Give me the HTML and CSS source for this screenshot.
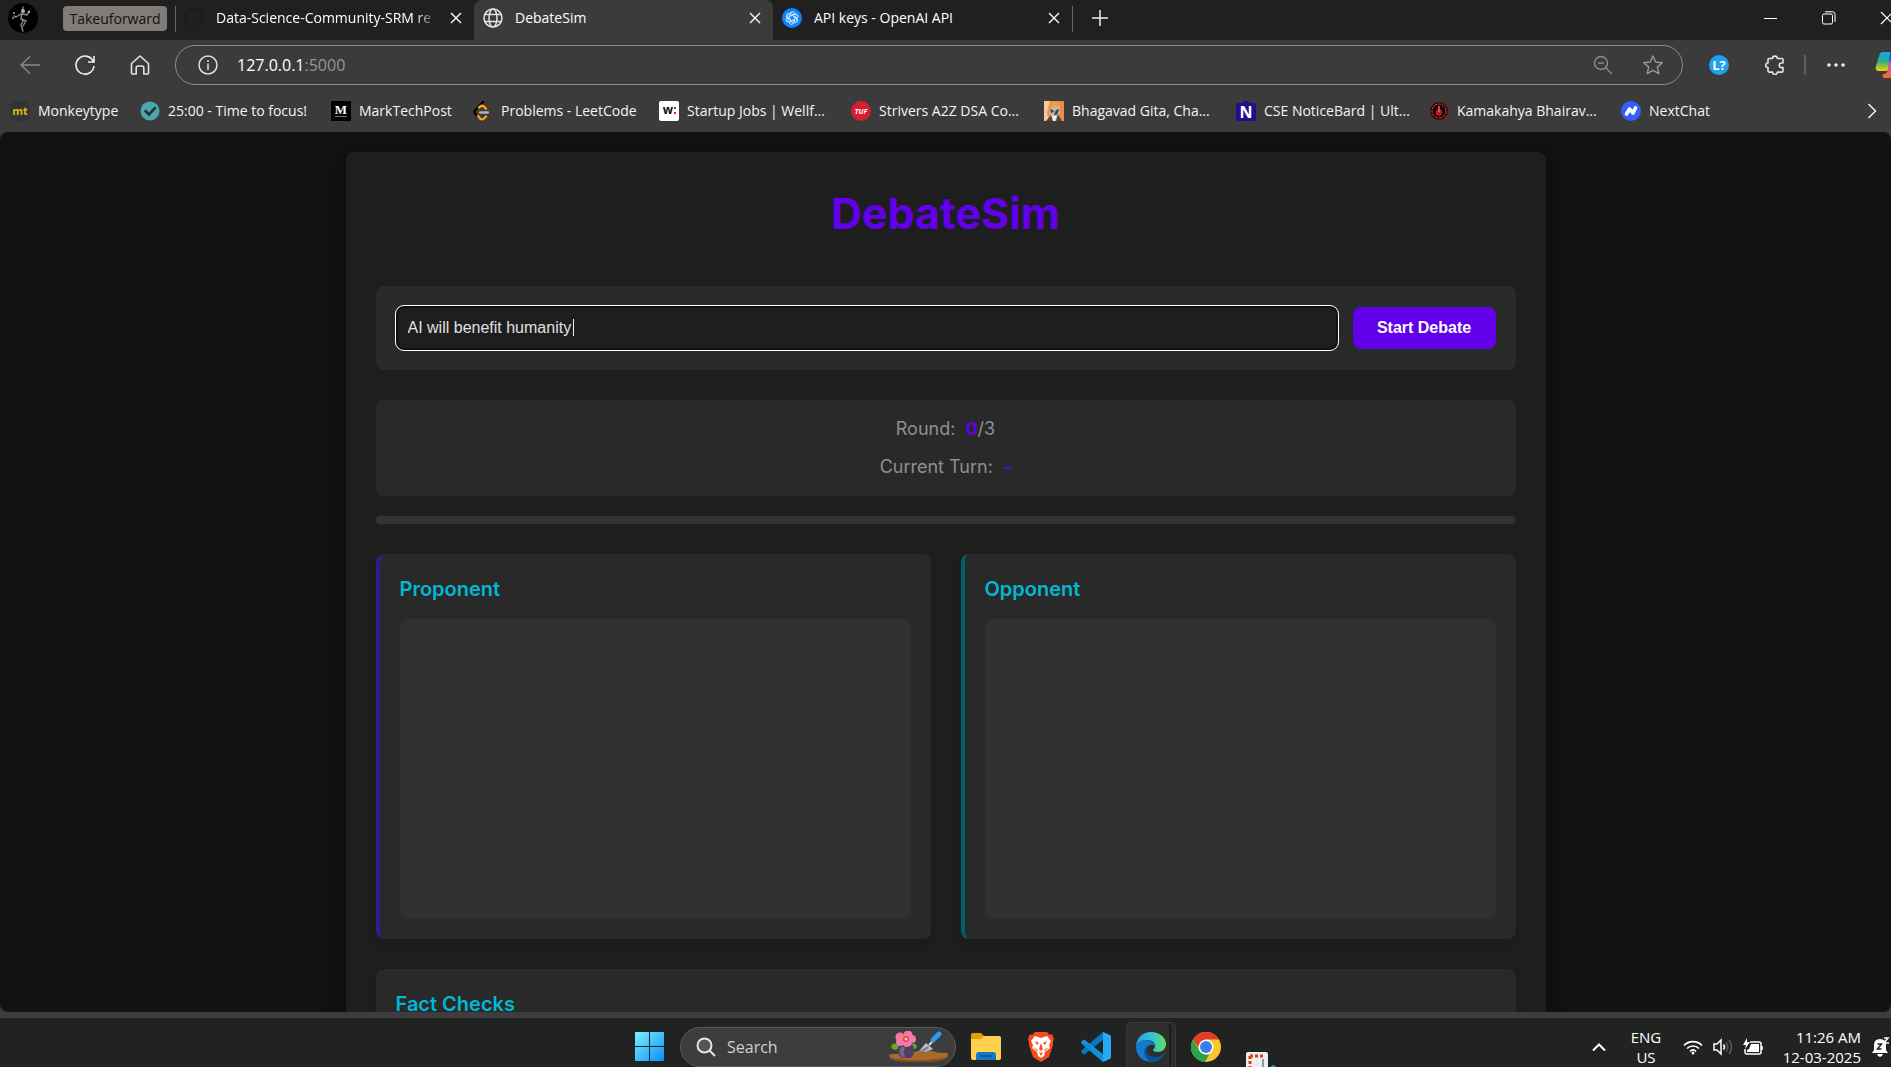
FILE: index.html
```html
<!DOCTYPE html>
<html lang="en">
<head>
<meta charset="utf-8">
<title>DebateSim</title>
<link rel="stylesheet" href="styles.css">
</head>
<body>
<header class="browser">
  <div class="tabstrip">
    <button class="profile" aria-label="Profile">
      <svg width="30" height="30" viewBox="0 0 30 30"><circle cx="15" cy="15" r="15" fill="#000"/><g fill="none" stroke="#8a8a8a" stroke-width="1.400" stroke-linecap="round" stroke-linejoin="round"><path d="M14 10l-1 5 2 3-2 4 2 6M13 16l5 2-3 5M13 11l-5 3-2-1M15 11l4 1 2-4M15 4v3"/></g><circle cx="15" cy="8" r="2" fill="#b0b0b0"/><circle cx="21" cy="9" r="1" fill="#ccc"/><circle cx="6" cy="10" r="1" fill="#aaa"/><circle cx="5" cy="15" r="1" fill="#999"/></svg>
    </button>
    <button class="group-chip">Takeuforward</button>
    <span class="divider first"></span>
    <div class="tab tab-one">
      <svg width="20" height="20" viewBox="0 0 16 16" fill="#1a1c20"><path d="M8 0a8 8 0 0 0-2.5 15.6c.4 0 .5-.2.5-.4v-1.500c-2.200.5-2.700-1-2.700-1-.4-.9-.9-1.200-.9-1.200-.7-.5.1-.5.1-.5.800.1 1.200.8 1.200.8.7 1.200 1.900.9 2.300.7.1-.5.3-.9.5-1.100-1.800-.2-3.600-.9-3.600-4 0-.9.3-1.600.8-2.100-.1-.2-.4-1 .1-2.100 0 0 .7-.2 2.200.8a7.500 7.500 0 0 1 4 0c1.500-1 2.200-.8 2.200-.8.4 1.100.2 1.900.1 2.100.5.6.8 1.300.8 2.100 0 3.100-1.900 3.800-3.600 4 .3.300.5.800.5 1.500v2.200c0 .2.1.5.6.4A8 8 0 0 0 8 0z"/></svg>
      <span class="tab-title">Data-Science-Community-SRM re</span>
      <button class="close" aria-label="Close tab"><svg width="12" height="12" viewBox="0 0 12 12"><path d="M1 1l10 10M11 1L1 11" stroke="#eee" stroke-width="1.500"/></svg></button>
    </div>
    <div class="tab tab-two active">
      <svg width="20" height="20" viewBox="0 0 20 20" fill="none" stroke="#e4e4e4" stroke-width="1.500"><circle cx="10" cy="10" r="9"/><ellipse cx="10" cy="10" rx="4" ry="9"/><path d="M2 6.500h16M2 13.500h16"/></svg>
      <span class="tab-title">DebateSim</span>
      <button class="close" aria-label="Close tab"><svg width="12" height="12" viewBox="0 0 12 12"><path d="M1 1l10 10M11 1L1 11" stroke="#eee" stroke-width="1.500"/></svg></button>
    </div>
    <div class="tab tab-three">
      <svg width="20" height="20" viewBox="0 0 20 20"><circle cx="10" cy="10" r="10" fill="#0a84ff"/><g fill="none" stroke="#d8ecff" stroke-width=".9"><path id="petal" d="M7.800 10V6.200a2.700 2.700 0 0 1 5-1.200M7.800 8l4-2.300 3 1.700"/><use href="#petal" transform="rotate(60 10 10)"/><use href="#petal" transform="rotate(120 10 10)"/><use href="#petal" transform="rotate(180 10 10)"/><use href="#petal" transform="rotate(240 10 10)"/><use href="#petal" transform="rotate(300 10 10)"/></g></svg>
      <span class="tab-title">API keys - OpenAI API</span>
      <button class="close" aria-label="Close tab"><svg width="12" height="12" viewBox="0 0 12 12"><path d="M1 1l10 10M11 1L1 11" stroke="#eee" stroke-width="1.500"/></svg></button>
    </div>
    <span class="divider"></span>
    <button class="new-tab" aria-label="New tab"><svg width="18" height="18" viewBox="0 0 18 18"><path d="M9 1v16M1 9h16" stroke="#eee" stroke-width="1.500"/></svg></button>
    <div class="window-controls">
      <button aria-label="Minimize"><svg width="14" height="14" viewBox="0 0 14 14"><path d="M0 7.500h13" stroke="#fff"/></svg></button>
      <button aria-label="Restore"><svg width="14" height="14" viewBox="0 0 14 14" fill="none" stroke="#fff"><rect x=".5" y="3" width="10" height="10" rx="1.500"/><path d="M3 .8h7.500a2.500 2.500 0 0 1 2.500 2.500V11"/></svg></button>
      <button aria-label="Close window"><svg width="14" height="14" viewBox="0 0 14 14"><path d="M1 1l12 12M13 1L1 13" stroke="#fff" stroke-width="1.200"/></svg></button>
    </div>
  </div>

  <div class="toolbar">
    <button aria-label="Back"><svg width="20" height="20" viewBox="0 0 20 20" fill="none" stroke="#8a8a8a" stroke-width="1.400"><path d="M20 10H1M10 1.500L1 10l9 8.500"/></svg></button>
    <button aria-label="Refresh"><svg width="20" height="20" viewBox="0 0 20 20" fill="none" stroke="#eee" stroke-width="1.600"><path d="M18.500 7A9 9 0 1 0 19 11M19 1v6h-6"/></svg></button>
    <button aria-label="Home"><svg width="20" height="20" viewBox="0 0 20 20" fill="none" stroke="#e4e4e4" stroke-width="1.600" stroke-linejoin="round"><path d="M1.500 8.500L10 1l8.500 7.500V18a1 1 0 0 1-1 1h-3.700v-6a2 2 0 0 0-2-2H8.200a2 2 0 0 0-2 2v6H2.500a1 1 0 0 1-1-1z"/></svg></button>
    <div class="address">
      <button aria-label="Site information"><svg width="20" height="20" viewBox="0 0 20 20" fill="none" stroke="#ddd" stroke-width="1.500"><circle cx="10" cy="10" r="9"/><path d="M10 8.500V15M10 5v2"/></svg></button>
      <div class="url" role="textbox" aria-label="Address">127.0.0.1<span>:5000</span></div>
      <button aria-label="Zoom"><svg width="20" height="20" viewBox="0 0 20 20" fill="none" stroke="#8c8c8c" stroke-width="1.400"><circle cx="8" cy="8" r="6.500"/><path d="M12.700 12.700L19 19M5 8h6"/></svg></button>
      <button class="star" aria-label="Add to favorites"><svg width="20" height="20" viewBox="0 0 20 20" fill="none" stroke="#9a9a9a" stroke-width="1.400" stroke-linejoin="round"><path d="M10 1l2.700 6 6.600.7-5 4.400 1.500 6.500L10 15.300l-5.800 3.300 1.500-6.500-5-4.400 6.600-.7z"/></svg></button>
    </div>
    <div class="tools">
      <button class="ext" aria-label="Extension"><b>L?</b></button>
      <button aria-label="Extensions"><svg width="20" height="20" viewBox="0 0 20 20" fill="none" stroke="#e4e4e4" stroke-width="1.600" stroke-linejoin="round"><path d="M4 3.500h3.500a2.400 2.400 0 0 1 4.800 0H17a1 1 0 0 1 1 1V8h-1.500a2.300 2.300 0 0 0 0 4.600H18v3.500a1 1 0 0 1-1 1h-4.700a2.400 2.400 0 0 1-4.800 0H4a1 1 0 0 1-1-1v-3.500a2.300 2.300 0 0 1 0-4.600V4.500a1 1 0 0 1 1-1z"/></svg></button>
      <span class="tool-divider"></span>
      <button aria-label="Settings and more"><svg width="20" height="20" viewBox="0 0 20 20" fill="#eee"><circle cx="3" cy="10" r="1.800"/><circle cx="10" cy="10" r="1.800"/><circle cx="17" cy="10" r="1.800"/></svg></button>
      <button class="copilot" aria-label="Copilot"><svg width="30" height="26" viewBox="0 0 30 26"><defs><linearGradient id="cpA" x1="0" y1="0" x2="0" y2="1"><stop offset="0" stop-color="#16a8f0"/><stop offset=".5" stop-color="#2cae8a"/><stop offset="1" stop-color="#ffd000"/></linearGradient><linearGradient id="cpB" x1="0" y1="0" x2="0" y2="1"><stop offset="0" stop-color="#a84fe0"/><stop offset="1" stop-color="#ff6a2b"/></linearGradient></defs><path d="M8 0h13l-5 15c-1 3-3 4-6 4H4c-3 0-4-2-3-5L4 4c1-3 2-4 4-4z" fill="url(#cpA)"/><path d="M14 9h13c3 0 3 3 2 6l-2 7c-1 3-3 4-5 4H9c-1 0-2-2-1-4 3 0 4-1 5-5z" fill="url(#cpB)"/><path d="M15 0h6l-3 9h-4z" fill="#2052cb"/></svg></button>
    </div>
  </div>

  <nav class="bookmarks" aria-label="Favorites">
    <a href="#"><svg class="mt" width="20" height="20" viewBox="0 0 20 20"><rect width="20" height="20" rx="4" fill="#323437"/><text x="10" y="14" text-anchor="middle">mt</text></svg><span>Monkeytype</span></a>
    <a href="#"><svg width="20" height="20" viewBox="0 0 20 20"><circle cx="10" cy="10" r="9.500" fill="#4ba7ae"/><path d="M5.500 10l3.500 3.500L15 7" fill="none" stroke="#25353a" stroke-width="2.600" stroke-linecap="round"/></svg><span>25:00 - Time to focus!</span></a>
    <a href="#"><svg class="mk" width="20" height="20" viewBox="0 0 20 20"><rect width="20" height="20" fill="#000"/><text x="10" y="13" text-anchor="middle">M</text><path d="M4 15.500h12" stroke="#777"/></svg><span>MarkTechPost</span></a>
    <a href="#"><svg width="20" height="20" viewBox="0 0 20 20" fill="none" stroke-width="2.300" stroke-linecap="round"><path d="M10 1L2 9.500a2 2 0 0 0 0 3L5 16" stroke="#000"/><path d="M5 15l2 2.500a3 3 0 0 0 4 0l2-2M6 6.500l1-.8a3 3 0 0 1 4 0l2 2" stroke="#ffa116"/><path d="M7 11.500h8" stroke="#b3b3b3"/></svg><span>Problems - LeetCode</span></a>
    <a href="#"><svg class="wf" width="20" height="20" viewBox="0 0 20 20"><rect width="20" height="20" rx="2" fill="#fff"/><text x="9" y="13" text-anchor="middle">w</text><path d="M15 6h2v2h-2zM15 11h2v2h-2z" fill="#e02020"/></svg><span>Startup Jobs | Wellf...</span></a>
    <a href="#"><svg class="tuf" width="20" height="20" viewBox="0 0 20 20"><circle cx="10" cy="10" r="10" fill="#d41f30"/><text x="10" y="13" text-anchor="middle">TUF</text></svg><span>Strivers A2Z DSA Co...</span></a>
    <a href="#"><svg width="20" height="20" viewBox="0 0 20 20"><rect width="20" height="20" fill="#eb8a4b"/><path d="M0 0h6L3 12l2 8H0z" fill="#f7c79d"/><path d="M5 8c0-5 2-7 5-7s6 2 6 6l-1 13H6z" fill="#c9b7a6"/><path d="M4 6c2-6 10-6 12 0l-5-2-5 4z" fill="#f59b22"/><path d="M6 8l3 1 1 2-3 1zM12 9l3-1-1 4-2 3-2-1zM2 20l5-6 2 6zM14 13l4 7h-6z" fill="#4c443f"/><path d="M8 15l5-1-2 6H9z" fill="#eee"/></svg><span>Bhagavad Gita, Cha...</span></a>
    <a href="#"><svg class="nb" width="20" height="20" viewBox="0 0 20 20"><path d="M2 2h5a3 3 0 0 1 6 0h5a2 2 0 0 1 2 2v14a2 2 0 0 1-2 2H2a2 2 0 0 1-2-2V4a2 2 0 0 1 2-2z" fill="#250c8c"/><text x="10" y="17" text-anchor="middle">N</text></svg><span>CSE NoticeBard | Ult...</span></a>
    <a href="#"><svg width="20" height="20" viewBox="0 0 20 20"><circle cx="10" cy="10" r="9.300" fill="#160808" stroke="#9c1119" stroke-width="1.200"/><circle cx="10" cy="10" r="7" fill="none" stroke="#777" stroke-dasharray="3 1"/><circle cx="10" cy="11.500" r="3.200" fill="#d10f18"/><path d="M10 5v6" stroke="#e66" stroke-width="1.500"/></svg><span>Kamakahya Bhairav...</span></a>
    <a href="#"><svg width="20" height="20" viewBox="0 0 20 20"><circle cx="10" cy="10" r="10" fill="#335fff"/><path d="M5.500 13L8.500 8l3.500 4 2.500-5" fill="none" stroke="#fff" stroke-width="3.600" stroke-linecap="round" stroke-linejoin="round"/></svg><span>NextChat</span></a>
    <button aria-label="More favorites"><svg width="10" height="16" viewBox="0 0 10 16"><path d="M1.500 1l7 7-7 7" fill="none" stroke="#eee" stroke-width="1.600"/></svg></button>
  </nav>
</header>

<main class="viewport">
  <div class="app">
    <h1>DebateSim</h1>
    <form class="topic">
      <div class="topic-field">
        <input type="text" value="AI will benefit humanity" aria-label="Debate topic">
        <span class="caret"></span>
      </div>
      <button type="button">Start Debate</button>
    </form>
    <section class="status">
      <p>Round: <strong>0</strong>/3</p>
      <p>Current Turn: <strong>-</strong></p>
    </section>
    <div class="progress"></div>
    <div class="sides">
      <section class="side proponent"><h2>Proponent</h2><div class="speech"></div></section>
      <section class="side opponent"><h2>Opponent</h2><div class="speech"></div></section>
    </div>
    <section class="facts"><h2>Fact Checks</h2></section>
  </div>
</main>

<footer class="taskbar">
  <div class="apps">
    <button aria-label="Start"><svg width="30" height="30" viewBox="0 0 30 30"><defs><linearGradient id="win" gradientUnits="userSpaceOnUse" x1="0" y1="0" x2="29" y2="29"><stop offset="0" stop-color="#7cf0ff"/><stop offset="1" stop-color="#0a8ffa"/></linearGradient></defs><path d="M0 1q0-1 1-1h13v14H0zM15 0h13q1 0 1 1v13H15zM0 15h14v14H1q-1 0-1-1zM15 15h14v13q0 1-1 1H15z" fill="url(#win)"/></svg></button>
    <label class="search">
      <svg width="20" height="20" viewBox="0 0 20 20" fill="none" stroke="#e6e6e6" stroke-width="2"><circle cx="8.500" cy="8.500" r="7" fill="#555"/><path d="M13.500 13.500L19 19"/></svg>
      <input type="text" placeholder="Search" aria-label="Search">
      <svg width="60" height="32" viewBox="0 0 60 32"><path d="M1 24c8-3 14 1 22-2s18-3 25-1 12-1 12 3-7 7-29 7S2 30 1 24z" fill="#a8692c"/><path d="M2 26c10 5 45 4 56 0-3 4-14 5-28 5S4 30 2 26z" fill="#80481b"/><path d="M3 15c3-4 7-3 8 2-4 3-7 2-8-2zM22 16c2-5 6-4 7 0-2 3-5 3-7 0z" fill="#62a82c"/><path d="M11 14h14c2 6 1 12-3 13h-8c-4-2-5-7-3-13z" fill="#4d405f"/><path d="M13 16h4c-2 4-1 8 1 10h-4c-3-3-3-6-1-10z" fill="#746287"/><g fill="#f27aa5"><circle cx="12" cy="6" r="4.500"/><circle cx="20" cy="4" r="4.500"/><circle cx="24" cy="8" r="4"/><circle cx="19" cy="11" r="5"/><circle cx="12" cy="11" r="4"/></g><circle cx="18" cy="8" r="3" fill="#e43c62"/><circle cx="18" cy="8" r="1.500" fill="#ffd451"/><path d="M31 20l7-8 7 6-8 3z" fill="#b9c4cc"/><path d="M31 20l9-5 1 2-5 4z" fill="#788791"/><path d="M41 14l5-5" stroke="#dce4e8" stroke-width="2"/><path d="M45 9l6-6" stroke="#2b9af0" stroke-width="5" stroke-linecap="round"/></svg>
    </label>
    <button aria-label="File Explorer"><svg width="30" height="28" viewBox="0 0 30 28"><path d="M0 2q0-2 2-2h8l3 3h13v8H0z" fill="#df9d0b"/><path d="M0 6h10l3-3h15q2 0 2 2v20q0 2-2 2H2q-2 0-2-2z" fill="#ffcf50"/><path d="M5 27v-5q0-3 3-3h14q3 0 3 3v5z" fill="#1478c9"/><path d="M9 23h12" stroke="#0b4f94" stroke-width="1.500"/></svg></button>
    <button aria-label="Brave"><svg width="26" height="30" viewBox="0 0 26 30"><path d="M7 0h12l3 3 2-1 2 5-1 3 0 3-4 12-8 5-8-5L1 13l0-3L0 7l2-5 2 1z" fill="#fb4a1f"/><path d="M7 4l6 2 6-2 4 5-2 4 1 3-5 4-1 4-3 2-3-2-1-4-5-4 1-3-2-4z" fill="#fff"/><path d="M7 9l4 2-2 2zM19 9l-4 2 2 2zM13 11l-2 6 2 2 2-2zM5 15l5 3-1 1zM21 15l-5 3 1 1zM11 20l2 1 2-1-2 4z" fill="#fb4a1f"/></svg></button>
    <button aria-label="Visual Studio Code"><svg width="30" height="30" viewBox="0 0 30 30"><path d="M22 0v8L4 22q-1 1-2 0l-2-2q0-1 1-2z" fill="#0877bd"/><path d="M22 30v-8L4 8Q3 7 2 8L0 10q0 1 1 2z" fill="#108fdc"/><path d="M22 0l7 3q1 1 1 2v20q0 1-1 2l-7 3z" fill="#27a9f4"/></svg></button>
    <button class="open" aria-label="Microsoft Edge"><svg width="30" height="30" viewBox="0 0 30 30"><defs><linearGradient id="edA"><stop offset="0" stop-color="#259fe6"/><stop offset=".55" stop-color="#35c3d6"/><stop offset="1" stop-color="#62e04c"/></linearGradient></defs><path d="M0 14C1 5 7 0 15 0c9 0 15 6 15 12 0 5-4 8-8 8-3 0-5-1-5-2s2-1 2-4c0-4-4-6-8-6-5 0-9 2-11 6z" fill="url(#edA)"/><path d="M0 15c0-4 5-7 9-7 6 0 9 3 10 6-4-3-9 0-9 4 0 5 5 9 9 11-11 3-19-5-19-14z" fill="#117dcc"/><path d="M11 14c-2 3-1 10 7 11 4 0 7-1 9-3 1-1 2 0 1 1-3 5-8 7-13 7C8 27 6 18 11 14z" fill="#104f9c"/></svg></button>
    <button aria-label="Google Chrome"><svg width="30" height="30" viewBox="0 0 30 30"><circle cx="15" cy="15" r="15" fill="#fcc62d"/><path d="M2 7.500A15 15 0 0 1 28 7.500H15L9 18z" fill="#e33b2e"/><path d="M2 7.500L8.500 19l6.500 3.500h3L14 30A15 15 0 0 1 2 7.500z" fill="#2ba24c"/><circle cx="15" cy="15" r="7.500" fill="#fff"/><circle cx="15" cy="15" r="6" fill="#3b7ded"/></svg></button>
    <button class="snip" aria-label="Snipping Tool"><svg width="30" height="15" viewBox="0 0 30 15"><path d="M0 15V2q0-2 2-2h18q2 0 2 2v13z" fill="#eee"/><path d="M4 4h14M4 4v11" fill="none" stroke="#d83b18" stroke-width="3" stroke-dasharray="3 2"/><path d="M16 7h2v8h-2z" fill="#92999f"/><path d="M25 15q0-2 3-2l2 2z" fill="#159bdd"/></svg></button>
  </div>
  <div class="tray">
    <button class="chevron" aria-label="Show hidden icons"><svg width="14" height="10" viewBox="0 0 14 10"><path d="M1 8.500l6-6 6 6" fill="none" stroke="#fff" stroke-width="2"/></svg></button>
    <button class="language">ENG<br>US</button>
    <div class="indicators">
      <svg width="20" height="16" viewBox="0 0 20 16" fill="none" stroke="#fff" stroke-width="1.700"><path d="M1 6.500a12.500 12.500 0 0 1 18 0M4 9.500a8.500 8.500 0 0 1 12 0M7 12.300a4.500 4.500 0 0 1 6 0"/><circle cx="10" cy="14" r="1.500" fill="#fff" stroke="none"/></svg>
      <svg width="20" height="18" viewBox="0 0 20 18" fill="none" stroke="#fff" stroke-width="1.500"><path d="M1 6h3l4-4v14l-4-4H1z"/><path d="M10.500 6.500q2 2.500 0 5"/><path d="M13 4.500q3.500 4.500 0 9M16 2q5 7 0 14" stroke="#5a5a5a"/></svg>
      <svg width="20" height="18" viewBox="0 0 20 18"><path d="M7 4h9q2 0 2 2v8q0 2-2 2H4q-2 0-2-2v-3" fill="none" stroke="#fff" stroke-width="1.500"/><path d="M8 6h8v8H4v-2l2-1zM18 8h1q1 0 1 2t-1 2h-1zM4 0L0 7h3L2 11l5-7H4z" fill="#fff"/></svg>
    </div>
    <time class="clock">11:26 AM<br>12-03-2025</time>
    <button class="bell" aria-label="Notifications"><svg width="18" height="20" viewBox="0 0 18 20"><path d="M0 16l2-3V8q0-6 6-6 6 0 6 6v5l2 3zM5 17h6q-1 3-3 3t-3-3z" fill="#fff"/><path d="M5.500 7h4l-4 5h4" fill="none" stroke="#222" stroke-width="1.500"/><path d="M12 1h4l-4 5h5" fill="none" stroke="#fff" stroke-width="1.500"/></svg></button>
  </div>
</footer>
</body>
</html>
```
FILE: styles.css
```css
* { box-sizing: border-box; }

body {
  margin: 0;
  height: 100vh;
  display: grid;
  grid-template-columns: minmax(0, 1fr);
  grid-template-rows: auto minmax(0, 1fr) auto;
  overflow: hidden;
  background: #3b3b3b;
  color: #fff;
  font: 15px/20px "Open Sans", sans-serif;
}

button {
  flex: none;
  padding: 0;
  border: 0;
  background: none;
  color: inherit;
  font: inherit;
}

svg { display: block; flex: none; }

/* Browser window */
.tabstrip {
  display: flex;
  align-items: flex-start;
  height: 40px;
  overflow: hidden;
  background: #202020;
}

.profile { margin: 3px 25px 0 8px; }

.group-chip {
  width: 104px;
  height: 25px;
  margin-top: 6px;
  border-radius: 4px;
  background: #827c78;
  color: #111;
  font-size: 14px;
}

.divider {
  width: 1px;
  height: 26px;
  margin-top: 6px;
  background: #686868;
}

.divider.first { margin-left: 8px; }

.tab {
  display: flex;
  align-items: center;
  gap: 12px;
  height: 40px;
  padding: 0 12px 4px 9px;
}

.tab-one { width: 298px; padding-left: 8px; }
.tab-two { width: 299px; }
.tab-three { width: 299px; }

.tab.active {
  background: #3b3b3b;
  border-radius: 8px 8px 0 0;
}

.tab-title {
  flex: 1;
  overflow: hidden;
  white-space: nowrap;
  font-size: 14px;
}

.tab-one .tab-title {
  -webkit-mask-image: linear-gradient(90deg, #000 90%, transparent);
  mask-image: linear-gradient(90deg, #000 90%, transparent);
}

.new-tab { margin: 9px 0 0 18px; }

.window-controls {
  display: flex;
  gap: 44px;
  margin: 11px -3px 0 auto;
}

.toolbar {
  display: flex;
  align-items: center;
  height: 50px;
  padding-left: 20px;
}

.toolbar > button { margin-right: 35px; }

.address {
  flex: 1;
  display: flex;
  align-items: center;
  height: 40px;
  margin-left: -10px;
  padding: 0 19px 0 22px;
  border: 1px solid #8c8c8c;
  border-radius: 20px;
}

.url {
  flex: 1;
  padding-left: 19px;
  font-size: 16px;
}

.url span { color: #969696; }

.star { margin-left: 30px; }

.tools {
  display: flex;
  align-items: center;
  width: 208px;
  padding-left: 26px;
}

.ext {
  width: 20px;
  height: 20px;
  margin-right: 36px;
  border-radius: 50%;
  background: #1da1f2;
  font-size: 13px;
}

.tool-divider {
  flex: none;
  width: 2px;
  height: 20px;
  margin: 0 20px 0 19px;
  background: #5c5c5c;
}

.copilot { margin-left: 29px; }

.bookmarks {
  display: grid;
  grid-template-columns: 130px 191px 142px 186px 192px 193px 192px 193px 192px minmax(0, 1fr) 24px;
  align-items: center;
  height: 42px;
  padding-left: 10px;
  font-size: 14px;
}

.bookmarks a {
  display: flex;
  align-items: center;
  gap: 8px;
  color: #f4f4f4;
  text-decoration: none;
  white-space: nowrap;
}

.bookmarks text { fill: #fff; font-weight: 700; }
.bookmarks .mt text { fill: #e2b714; font-size: 11px; }
.bookmarks .mk text { font: 700 13px "Liberation Serif", serif; }
.bookmarks .wf text { fill: #111; font-size: 12px; }
.bookmarks .tuf text { font-size: 7px; font-style: italic; }
.bookmarks .nb text { font-size: 16px; }

/* Page */
.viewport {
  overflow: hidden;
  padding: 20px;
  border-radius: 8px;
  background: #121212;
}

.app {
  display: flex;
  flex-direction: column;
  max-width: 1200px;
  min-height: 1000px;
  margin: 0 auto;
  padding: 30px;
  border-radius: 8px;
  background: #1e1e1e;
  box-shadow: 0 4px 20px rgba(0, 0, 0, 0.5);
  color: #8f8f8f;
  font: 18px/28px Inter, sans-serif;
}

h1 {
  margin: 0;
  padding: 6px 0 48px;
  color: #6200ea;
  font-size: 43px;
  line-height: 50px;
  text-align: center;
}

.topic {
  display: flex;
  align-items: center;
  gap: 15px;
  padding: 20px;
  border-radius: 8px;
  background: #292929;
}

.topic-field { position: relative; flex: 1; }

.topic input {
  display: block;
  width: 100%;
  height: 44px;
  padding: 0 10px;
  border: 2px solid #111;
  border-radius: 8px;
  outline: 1px solid #fff;
  background: #1e1e1e;
  color: #e0e0e0;
  font: 16px "Liberation Sans", Arial, sans-serif;
}

.caret {
  position: absolute;
  top: 13px;
  left: 177px;
  width: 1px;
  height: 17px;
  background: #eee;
}

.topic button {
  width: 143px;
  height: 42px;
  border-radius: 8px;
  background: #6200ea;
  color: #fff;
  font: 700 16px "Liberation Sans", Arial, sans-serif;
}

.status {
  display: flex;
  flex-direction: column;
  gap: 10px;
  margin-top: 30px;
  padding: 15px;
  border-radius: 8px;
  background: #292929;
  text-align: center;
}

.status p { margin: 0; }

.status strong {
  margin-left: 5px;
  color: #6200ea;
}

.progress {
  height: 8px;
  margin: 20px 0 30px;
  border-radius: 4px;
  background: #333;
}

.sides {
  display: grid;
  grid-template-columns: 1fr 1fr;
  gap: 30px;
}

.side, .facts {
  padding: 20px;
  border-radius: 8px;
  background: #292929;
  box-shadow: 0 4px 8px rgba(0, 0, 0, 0.15);
}

.proponent { border-left: 4px solid #311b92; }
.opponent { border-left: 4px solid #006064; }

h2 {
  margin: 0;
  color: #00b8d4;
  font-size: 20px;
  font-weight: 600;
  line-height: 30px;
}

.speech {
  height: 300px;
  margin-top: 15px;
  border-radius: 8px;
  background: #303030;
}

.facts { margin-top: 30px; }

/* Taskbar */
.taskbar {
  display: grid;
  grid-template-columns: 1fr auto 1fr;
  height: 55px;
  padding-left: 20px;
  overflow: hidden;
  border-top: 6px solid #3d3d3d;
  background: #212222;
}

.apps {
  grid-column: 2;
  display: flex;
  gap: 5px;
  height: 58px;
}

.apps button {
  display: grid;
  place-items: center;
  width: 50px;
}

.search {
  display: flex;
  align-items: center;
  width: 276px;
  height: 40px;
  margin-top: 9px;
  padding: 0 7px 0 15px;
  border: 1px solid #5a5a5a;
  border-radius: 20px;
  background: #3d3d3d;
}

.search input {
  flex: 1;
  min-width: 0;
  padding: 0 0 0 11px;
  border: 0;
  background: none;
  font: 16px/20px "Open Sans", sans-serif;
}

.search input::placeholder { color: #d0d0d0; }

.apps .open {
  margin-top: 4px;
  padding-bottom: 4px;
  border: 1px solid #3a3a3a;
  border-radius: 6px;
  background: linear-gradient(90deg, #2d2e2e 42px, #1c1d1d 42px, #1c1d1d 44px, #2b2c2c 44px);
}

.apps .snip { align-items: end; padding-bottom: 9px; }

.tray {
  display: flex;
  justify-content: flex-end;
  align-items: center;
  padding-right: 1px;
}

.language {
  width: 40px;
  margin: 0 17px 0 20px;
}

.indicators { display: flex; align-items: center; gap: 10px; }

.clock {
  width: 98px;
  margin-right: 11px;
  text-align: right;
}
```
